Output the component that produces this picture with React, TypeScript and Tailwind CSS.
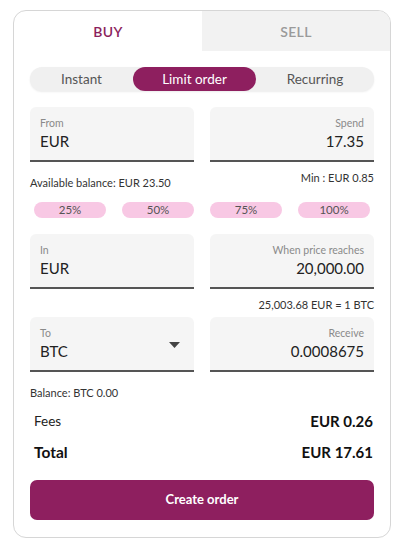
import React from 'react';

const font = { fontFamily: 'Lato, "Open Sans", sans-serif' };

const Field = ({ label, value, right, dropdown }: { label: string; value: string; right?: boolean; dropdown?: boolean }) => (
  <div className={`relative h-[55px] bg-[#f5f5f5] rounded-t-md border-b-2 border-[#555] px-[10px] pt-[9px] flex flex-col ${right ? 'items-end' : 'items-start'}`}>
    <span className="text-[10.5px] leading-[14px] text-[#8a8a8a]">{label}</span>
    <span className="text-[15px] leading-[20px] text-[#222] mt-[1px]">{value}</span>
    {dropdown && (
      <svg className="absolute right-[14px] top-[25px]" width="11" height="6" viewBox="0 0 11 6">
        <path d="M0 0h11L5.5 6z" fill="#444" />
      </svg>
    )}
  </div>
);

const Pill = ({ children }: { children: React.ReactNode }) => (
  <div className="h-[16px] rounded-full bg-[#f8c8e4] text-[11.5px] leading-[16px] text-[#555] text-center">{children}</div>
);

export default function App() {
  return (
    <div className="w-[403px] h-[552px] bg-white pt-[10px] pl-[13px]" style={font}>
      <div className="w-[378px] h-[528px] border border-[#d6d6d6] rounded-[13px] overflow-hidden flex flex-col">
        <div className="flex h-[40px]">
          <div className="w-[188px] flex items-center justify-center text-[14px] font-semibold text-[#8b1e5c] tracking-wide">BUY</div>
          <div className="flex-1 bg-[#f2f2f2] flex items-center justify-center text-[14px] font-semibold text-[#9a9a9a] tracking-wide">SELL</div>
        </div>
        <div className="px-[16px] flex flex-col">
          <div className="mt-[16px] h-[24px] rounded-full bg-[#f0f0f0] shadow-[0_1px_2px_rgba(0,0,0,0.08)] flex items-center text-[13.5px]">
            <div className="w-[103px] text-center text-[#555]">Instant</div>
            <div className="w-[123px] h-[24px] rounded-full bg-[#8e1f5f] text-white flex items-center justify-center">Limit order</div>
            <div className="flex-1 text-center text-[#555]">Recurring</div>
          </div>

          <div className="mt-[16px] grid grid-cols-2 gap-x-[16px]">
            <Field label="From" value="EUR" />
            <Field label="Spend" value="17.35" right />
          </div>
          <div className="grid grid-cols-2 gap-x-[16px] h-[32px]">
            <div className="text-[11px] text-[#333] pt-[13px]">Available balance: EUR 23.50</div>
            <div className="text-[11px] text-[#333] pt-[8px] text-right">Min : EUR 0.85</div>
          </div>
          <div className="mt-[8px] grid grid-cols-4 gap-x-[16px] px-[4px]">
            <Pill>25%</Pill>
            <Pill>50%</Pill>
            <Pill>75%</Pill>
            <Pill>100%</Pill>
          </div>

          <div className="mt-[16px] grid grid-cols-2 gap-x-[16px]">
            <Field label="In" value="EUR" />
            <Field label="When price reaches" value="20,000.00" right />
          </div>
          <div className="h-[28px] text-[11px] text-[#333] text-right pt-[8px]">25,003.68 EUR = 1 BTC</div>
          <div className="grid grid-cols-2 gap-x-[16px]">
            <Field label="To" value="BTC" dropdown />
            <Field label="Receive" value="0.0008675" right />
          </div>
          <div className="text-[11px] text-[#333] mt-[14px] leading-[14px]">Balance: BTC 0.00</div>

          <div className="mt-[10px] pl-[4px] pr-[1px] flex justify-between items-center">
            <span className="text-[13.5px] text-[#222]">Fees</span>
            <span className="text-[15px] font-bold text-[#111]">EUR 0.26</span>
          </div>
          <div className="mt-[8px] pl-[4px] pr-[1px] flex justify-between items-center">
            <span className="text-[15.5px] font-bold text-[#111]">Total</span>
            <span className="text-[15px] font-bold text-[#111]">EUR 17.61</span>
          </div>
          <button className="mt-[16px] h-[40px] rounded-[7px] bg-[#8e1f5f] text-white text-[13px] font-bold">Create order</button>
        </div>
      </div>
    </div>
  );
}
